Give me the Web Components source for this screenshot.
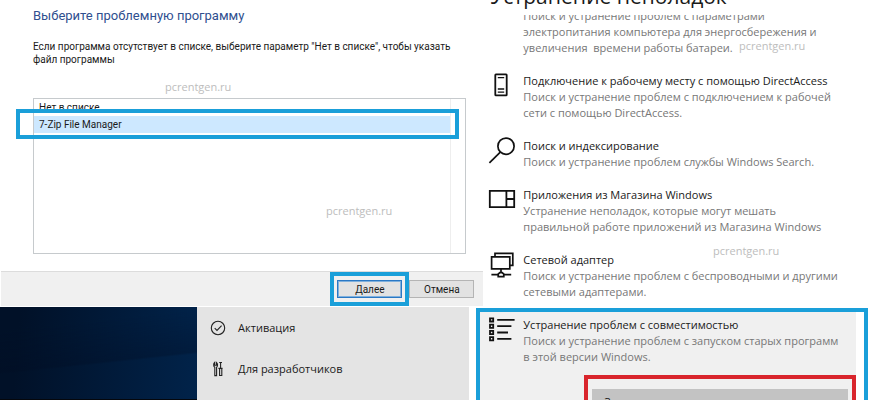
<!DOCTYPE html>
<html lang="ru">
<head>
<meta charset="UTF-8">
<meta name="viewport" content="width=device-width, initial-scale=1.0">
<title>Устранение неполадок</title>
<style>
  body {
    margin: 0;
    background: #fff;
    color: #1a1a1a;
    font-family: "Open Sans", "Noto Sans", sans-serif;
    font-size: 11px;
    --accent: #1a9fd9;
  }
</style>
</head>
<body>
<help-page>
  <wizard-dialog slot="left" heading="Выберите проблемную программу">
    Если программа отсутствует в списке, выберите параметр "Нет в списке", чтобы указать файл программы
  </wizard-dialog>
  <settings-strip slot="left">
    <nav-item>
      <svg slot="icon" width="16" height="16" viewBox="0 0 16 16" fill="none" stroke="#222" stroke-width="1.1"><circle cx="8" cy="8" r="6.7"/><path d="M4.7 8.2l2.3 2.3 4.6-4.8"/></svg>
      Активация
    </nav-item>
    <nav-item>
      <svg slot="icon" width="16" height="16" viewBox="0 0 16 16" fill="none" stroke="#222" stroke-width="1.1"><path d="M4.8 14.6V6.2C3.3 5.4 3.3 2.4 4.6 1.4v2.8h1.8V1.4c1.5 1 1.5 4 .2 4.8v8.4zM10.6 1.2v6M9.2 1.5h2.8M8.4 7.4h4.2M9.6 7.6v6.9h2.2V7.6"/></svg>
      Для разработчиков
    </nav-item>
  </settings-strip>
  <troubleshoot-list slot="right" heading="Устранение неполадок">
    <trouble-item class="cut">
      Поиск и устранение проблем с параметрами электропитания компьютера для энергосбережения и увеличения&nbsp; времени работы батареи.
    </trouble-item>
    <trouble-item name="Подключение к рабочему месту с помощью DirectAccess">
      <svg slot="icon" width="28" height="28" viewBox="0 0 28 28" fill="none" stroke="#111" stroke-width="1.8"><rect x="7.3" y="2.3" width="11.4" height="21" rx=".6"/><path d="M9.8 5.6h6.4M9.8 17h6.4M9.8 20.2h6.4" stroke-width="1.3"/></svg>
      Поиск и устранение проблем с подключением к рабочей сети с помощью DirectAccess.
    </trouble-item>
    <trouble-item name="Поиск и индексирование">
      <svg slot="icon" width="28" height="28" viewBox="0 0 28 28" fill="none" stroke="#111" stroke-width="1.7"><circle cx="18" cy="9.2" r="8.1"/><path d="M12.3 15.2L1.4 25.8"/></svg>
      Поиск и устранение проблем службы Windows Search.
    </trouble-item>
    <trouble-item name="Приложения из Магазина Windows">
      <svg slot="icon" width="28" height="28" viewBox="0 0 28 28" fill="none" stroke="#111" stroke-width="1.8"><path d="M1.8 4.8h24.4v16.4H1.8zM18.4 4.8v16.4M18.4 13h7.8"/></svg>
      Устранение неполадок, которые могут мешать правильной работе приложений из Магазина Windows
    </trouble-item>
    <trouble-item name="Сетевой адаптер">
      <svg slot="icon" width="28" height="28" viewBox="0 0 28 28" fill="none" stroke="#111" stroke-width="1.7"><path d="M3.6 5.8h18.2v12H3.6zM7 5.8V2.4h17.8v12h-3M13 17.8v4M3.4 23.7h6.8M15.8 23.7h7.4"/><path d="M10.2 25.6v-2.4l1.6-1.6h2.4l1.6 1.6v2.4z" fill="#fff"/></svg>
      Поиск и устранение проблем с беспроводными и другими сетевыми адаптерами.
    </trouble-item>
    <trouble-item class="active" name="Устранение проблем с совместимостью">
      <svg slot="icon" width="28" height="28" viewBox="0 0 28 28" fill="none" stroke="#111" stroke-width="1.8"><path d="M2 2.3h3.2v3.2H2zM2 8.6h3.2v3.2H2zM2 14.9h3.2v3.2H2zM2 21.2h3.2v3.2H2zM9.2 3.9h17.4M9.2 10.2h14.2M9.2 16.5h10.8M9.2 22.8h14.2"/></svg>
      Поиск и устранение проблем с запуском старых программ в этой версии Windows.
    </trouble-item>
  </troubleshoot-list>
  <water-mark style="left:165px;top:78px"></water-mark>
  <water-mark style="left:326px;top:202px"></water-mark>
  <water-mark style="left:739px;top:37px"></water-mark>
  <water-mark style="left:713px;top:242px"></water-mark>
</help-page>

<script>
class HelpPage extends HTMLElement {
  connectedCallback() {
    this.attachShadow({ mode: 'open' });
    this.shadowRoot.innerHTML = `
      <style>
        :host {
          display: grid;
          grid-template-columns: minmax(0, 5fr) minmax(0, 4fr);
          position: relative;
          height: 100vh;
          overflow: hidden;
        }
        .left {
          display: flex;
          flex-direction: column;
          min-height: 0;
        }
        .right {
          display: grid;
          grid-template-columns: minmax(0, 1fr);
          min-height: 0;
        }
      </style>
      <div class="left"><slot name="left"></slot></div>
      <div class="right"><slot name="right"></slot></div>
      <slot></slot>
    `;
  }
}
customElements.define('help-page', HelpPage);

class WizardDialog extends HTMLElement {
  connectedCallback() {
    this.attachShadow({ mode: 'open' });
    this.shadowRoot.innerHTML = `
      <style>
        :host {
          display: block;
          font-family: Roboto, "Open Sans", sans-serif;
          font-size: 10px;
          line-height: 13px;
        }
        .body {
          padding: 7px 17px 17px 33px;
        }
        h1 {
          margin: 0 0 15px;
          color: #2f4f8f;
          font-size: 13px;
          font-weight: 400;
          line-height: 18px;
        }
        label {
          display: block;
          margin-bottom: 32px;
        }
        .list {
          position: relative;
        }
        select {
          display: block;
          box-sizing: border-box;
          width: 100%;
          height: 156px;
          padding: 0 15px 0 0;
          border: 1px solid #c6cacd;
          border-radius: 0;
          background: linear-gradient(#eee, #eee) right 14px top / 1px 100% no-repeat #fff;
          color: inherit;
          font: inherit;
          overflow: hidden;
          outline: none;
        }
        option {
          box-sizing: border-box;
          height: 17px;
          padding: 3px 5px 0;
        }
        option:checked {
          background: linear-gradient(#cde8ff, #cde8ff);
          color: #1a1a1a;
        }
        .mark {
          position: absolute;
          box-sizing: border-box;
          border: 4px solid var(--accent);
          pointer-events: none;
        }
        .list .mark {
          inset: 11px 7px auto -17px;
          height: 30px;
        }
        footer {
          display: flex;
          justify-content: flex-end;
          gap: 7px;
          padding: 8px 9px;
          margin: 0 0 1px 1px;
          border-top: 1px solid #dcdcdc;
          background: #f0f0f0;
        }
        .next {
          position: relative;
          display: flex;
        }
        .next .mark {
          inset: -8px -7px;
        }
        button {
          width: 65px;
          height: 18px;
          padding: 0;
          border: 1px solid #b4b4b4;
          border-radius: 0;
          background: #e2e2e2;
          color: inherit;
          font: inherit;
        }
        .next button {
          border-color: #2a78c4;
          box-shadow: inset 0 0 0 1px #7fb0dd;
        }
      </style>
      <div class="body">
        <h1>${this.getAttribute('heading')}</h1>
        <label for="programs"><slot></slot></label>
        <div class="list">
          <select id="programs" size="9">
            <option>Нет в списке</option>
            <option selected>7-Zip File Manager</option>
          </select>
          <div class="mark"></div>
        </div>
      </div>
      <footer>
        <div class="next"><button type="button">Далее</button><div class="mark"></div></div>
        <button type="button">Отмена</button>
      </footer>
    `;
  }
}
customElements.define('wizard-dialog', WizardDialog);

class SettingsStrip extends HTMLElement {
  connectedCallback() {
    this.attachShadow({ mode: 'open' });
    this.shadowRoot.innerHTML = `
      <style>
        :host {
          display: flex;
          flex: 1;
          min-height: 0;
          padding-right: 14px;
        }
        .wallpaper {
          width: 42%;
          border-bottom: 1px solid #05070c;
          background:
            linear-gradient(174deg, transparent 20%, rgba(0, 12, 34, 0.3) 58%, transparent 60%),
            linear-gradient(95deg, #011128 10%, #01234a 100%);
        }
        nav {
          flex: 1;
          background: #e4e4e4;
        }
      </style>
      <div class="wallpaper"></div>
      <nav><slot></slot></nav>
    `;
  }
}
customElements.define('settings-strip', SettingsStrip);

class NavItem extends HTMLElement {
  connectedCallback() {
    this.attachShadow({ mode: 'open' });
    this.shadowRoot.innerHTML = `
      <style>
        :host {
          display: block;
        }
        a {
          display: flex;
          align-items: center;
          gap: 12px;
          height: 41px;
          padding-left: 13px;
          color: inherit;
          text-decoration: none;
        }
        ::slotted(svg) {
          display: block;
        }
      </style>
      <a href="#"><slot name="icon"></slot><span><slot></slot></span></a>
    `;
  }
}
customElements.define('nav-item', NavItem);

class TroubleshootList extends HTMLElement {
  connectedCallback() {
    this.attachShadow({ mode: 'open' });
    this.shadowRoot.innerHTML = `
      <style>
        :host {
          display: flex;
          flex-direction: column;
          min-height: 0;
        }
        header {
          display: flex;
          align-items: flex-end;
          height: 15px;
          padding-left: 7px;
          overflow: hidden;
        }
        h2 {
          margin: 0;
          font-size: 21px;
          font-weight: 400;
          line-height: 38px;
        }
        .scroll {
          flex: 1;
          display: flex;
          flex-direction: column;
          gap: 16px;
          min-height: 0;
          overflow: hidden;
          /* lets the frame of the active item reach over the column edge */
          margin-left: -7px;
          padding-left: 7px;
        }
        .panel {
          flex: none;
          position: relative;
          margin: -4px 14px 0 -3px;
          padding: 4px 0 0 3px;
          background: #f0f0f0;
        }
        .panel::before {
          content: "";
          position: absolute;
          inset: -4px -12px -8px -4px;
          border: 4px solid var(--accent);
        }
        .run {
          position: relative;
          margin: 10px 0 0 101px;
          padding: 10px 4px;
          border: 4px solid #d9252c;
        }
        button {
          width: 100%;
          padding: 5px 12px;
          border: 0;
          background: #c3c3c3;
          color: inherit;
          font: inherit;
          line-height: 16px;
          text-align: left;
        }
      </style>
      <header><h2>${this.getAttribute('heading')}</h2></header>
      <div class="scroll">
        <slot></slot>
        <div class="panel">
          <slot name="active"></slot>
          <div class="run"><button type="button">Запустить средство устранения неполадок</button></div>
        </div>
      </div>
    `;
    this.querySelector('.active').slot = 'active';
  }
}
customElements.define('troubleshoot-list', TroubleshootList);

class TroubleItem extends HTMLElement {
  connectedCallback() {
    const name = this.getAttribute('name');
    this.attachShadow({ mode: 'open' });
    this.shadowRoot.innerHTML = `
      <style>
        :host {
          display: flex;
          flex: none;
          gap: 7px;
          padding: 0 28px 0 5px;
        }
        :host(.cut) {
          margin-top: -7px;
        }
        :host(.active) {
          padding-right: 12px;
        }
        .icon {
          flex: none;
          width: 28px;
        }
        h3 {
          margin: 0;
          font-size: 11px;
          font-weight: 400;
          line-height: 17px;
        }
        p {
          margin: 0;
          color: #777;
          line-height: 16px;
        }
      </style>
      <div class="icon"><slot name="icon"></slot></div>
      <div>
        ${name ? `<h3>${name}</h3>` : ''}
        <p><slot></slot></p>
      </div>
    `;
  }
}
customElements.define('trouble-item', TroubleItem);

class WaterMark extends HTMLElement {
  connectedCallback() {
    this.attachShadow({ mode: 'open' });
    this.shadowRoot.innerHTML = `
      <style>
        :host {
          position: absolute;
          color: #bdbdbd;
          line-height: 18px;
          pointer-events: none;
        }
      </style>
      <span>pcrentgen.ru</span>
    `;
  }
}
customElements.define('water-mark', WaterMark);
</script>
</body>
</html>
